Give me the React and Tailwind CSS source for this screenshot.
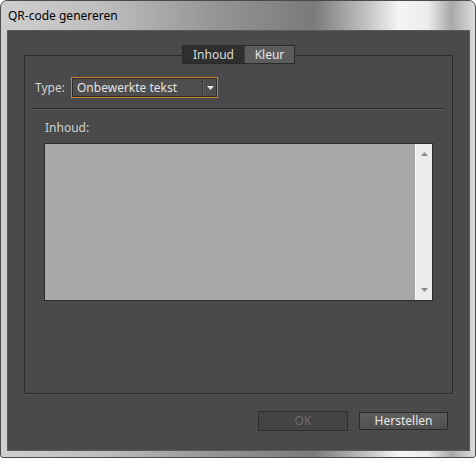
import React from "react";

const ui = { fontFamily: '"Noto Sans", "Open Sans", Arial, sans-serif' };

function Tabs() {
  return (
    <div className="relative z-10 flex justify-center h-[19px]">
      <div className="flex border border-[#2a2a2a] text-[12px] leading-[17px]">
        <div className="w-[61px] bg-[#2f2f2f] text-[#dcdcdc] text-center">Inhoud</div>
        <div className="w-[50px] bg-[#5c5c5c] text-[#e6e6e6] text-center border-l border-[#3a3a3a]">Kleur</div>
      </div>
    </div>
  );
}

function TypeSelect() {
  return (
    <div className="flex items-center h-[21px]">
      <span className="w-[36px] text-[12px] text-[#d2d2d2]">Type:</span>
      <div className="flex w-[147px] h-[21px] border border-[#cf7f2c] bg-[#2c2c2c] p-px">
        <div className="flex flex-1 items-center bg-[#4e4e4e]">
          <span className="pl-[4px] flex-1 text-[12px] text-[#e2e2e2] leading-none">Onbewerkte tekst</span>
          <div className="w-px h-[15px] bg-[#3a3a3a]" />
          <div className="w-px h-[15px] bg-[#5f5f5f]" />
          <div className="w-[12px] flex items-center justify-center">
            <svg width="7" height="4" viewBox="0 0 7 4">
              <path d="M0 0h7L3.5 4z" fill="#e8e8e8" />
            </svg>
          </div>
        </div>
      </div>
    </div>
  );
}

function TextArea() {
  return (
    <div className="flex h-[158px] border border-[#2a2a2a]">
      <div className="flex-1 bg-[#a8a8a8]" />
      <div className="w-[17px] bg-[#ececec] border-l border-[#f6f6f6] flex flex-col items-center justify-between py-[8px]">
        <svg width="7" height="4" viewBox="0 0 7 4">
          <path d="M3.5 0L7 4H0z" fill="#8c8c8c" />
        </svg>
        <svg width="7" height="4" viewBox="0 0 7 4">
          <path d="M0 0h7L3.5 4z" fill="#8c8c8c" />
        </svg>
      </div>
    </div>
  );
}

export default function App() {
  return (
    <div
      style={ui}
      className="w-[476px] h-[458px] flex flex-col rounded-t-[7px] rounded-b-[3px] border border-[#4a4a4a] bg-[linear-gradient(90deg,#cfcfcf_0%,#bdbdbd_22%,#959595_45%,#7a7a7a_66%,#c8c8c8_78%,#f6f6f6_84%,#ececec_90%,#a8a8a8_95%,#dcdcdc_100%)] pl-[6px] pr-[5px] pb-[6px]"
    >
      <div className="h-[29px] flex items-center pl-[1px] text-[12px] text-black">QR-code genereren</div>
      <div className="flex-1 flex flex-col border border-[#5a5a5a] bg-[#4a4a4a] px-[16px]">
        <div className="mt-[14px]">
          <Tabs />
        </div>
        <div className="mt-[-9px] h-[339px] border border-[#2c2c2c] shadow-[0_1px_0_#555] flex flex-col">
          <div className="pl-[10px] mt-[21px]">
            <TypeSelect />
          </div>
          <div className="mx-[7px] mt-[10px] h-px bg-[#2e2e2e] shadow-[0_1px_0_#585858]" />
          <div className="pl-[20px] mt-[12px] text-[12px] text-[#d2d2d2] leading-[14px]">Inhoud:</div>
          <div className="mx-[19px] mt-[8px]">
            <TextArea />
          </div>
        </div>
        <div className="flex justify-end gap-[11px] mt-[17px] pr-[5px]">
          <div className="w-[90px] h-[20px] border border-[#2d2d2d] bg-[#444444] flex items-center justify-center text-[12px] text-[#6c6c6c]">OK</div>
          <div className="w-[89px] h-[18px] mt-px border border-[#2a2a2a] bg-[linear-gradient(#5d5d5d,#4f4f4f)] flex items-center justify-center text-[12px] text-[#e8e8e8]">Herstellen</div>
        </div>
      </div>
    </div>
  );
}
